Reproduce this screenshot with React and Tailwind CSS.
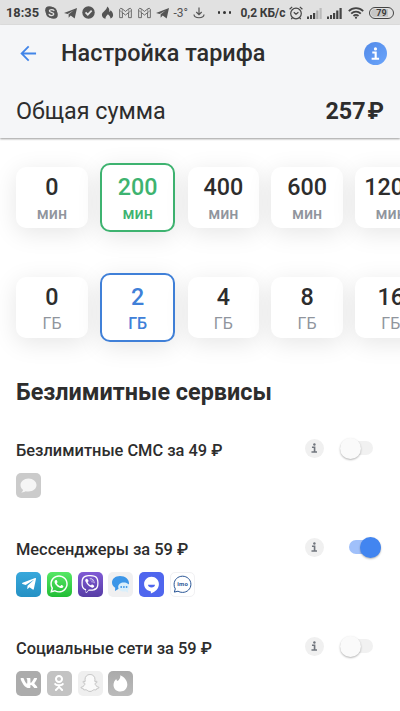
import React, { useState } from "react";
import {
  FaTelegramPlane,
  FaWhatsapp,
  FaViber,
  FaVk,
  FaOdnoklassniki,
  FaSnapchatGhost,
} from "react-icons/fa";

const minutes = ["0", "200", "400", "600", "1200"];
const gigabytes = ["0", "2", "4", "8", "16"];

const Signal = ({ weak }) => (
  <svg viewBox="0 0 15 12" className="w-[15px] h-3 shrink-0" fill="#444">
    <rect x="0" y="9.5" width="2" height="2.5" />
    <rect x="3" y="8" width="2" height="4" />
    <rect x="6" y="6" width="2.2" height="6" />
    <rect x="9.2" y="3.5" width="2.2" height="8.5" fill={weak ? "#aaa" : "#444"} />
    <rect x="12.5" y="1" width="2.2" height="11" fill={weak ? "#bbb" : "#444"} />
  </svg>
);

const Mail = () => (
  <svg viewBox="0 0 14 12" className="w-[13px] h-3 shrink-0" fill="none" stroke="#555" strokeWidth="0.9">
    <path d="M.7 11V2.1Q1.5.2 3.2 1.3L7 4.3l3.8-3Q12.5.2 13.3 2.1V11h-3V5.6L7 8.2 3.7 5.6V11z" />
    <path d="M.9 3.4 3.7 5.6M13.1 3.4l-2.8 2.2M3.5 1.7v3.8M10.5 1.7v3.8" strokeWidth="0.6" />
  </svg>
);

const PaperPlane = () => (
  <svg viewBox="0 0 14 12" className="w-[13px] h-3" fill="currentColor">
    <path d="M0 6 14 .5 11.5 11.8 7.2 8.8 5 11V7.4L10.6 3 3.9 7.1z" />
  </svg>
);

const InfoMark = ({ className }) => (
  <svg viewBox="0 0 8 12" className={className} fill="none" stroke="currentColor" strokeWidth="2">
    <path d="M1.2 5h3.200v5.600M.6 10.900h7" />
    <circle cx="4.200" cy="1.700" r="1.500" fill="currentColor" stroke="none" />
  </svg>
);

const StatusBar = () => (
  <div className="flex items-center h-[25px] bg-[#e1e1e1] pl-[6px] pr-[6px] text-[#3b3b3b] whitespace-nowrap">
    <span className="w-[39px] text-[12.800px] font-bold">18:35</span>
    <div className="flex items-center gap-[5.500px] text-[#555]">
      <svg viewBox="0 0 14 14" className="w-[13px] h-[13px]">
        <circle cx="4.6" cy="4.6" r="4.4" fill="#555" />
        <circle cx="9.4" cy="9.4" r="4.4" fill="#555" />
        <circle cx="7" cy="7" r="6.1" fill="#555" />
        <path
          d="M9.6 4.8C9 3.6 4.9 3.2 4.7 5.2c-.1 2 4.8 1.2 4.8 3.5-.1 2.1-4.3 2-5.1.3"
          fill="none"
          stroke="#e1e1e1"
          strokeWidth="1.4"
          strokeLinecap="round"
        />
      </svg>
      <PaperPlane />
      <svg viewBox="0 0 14 14" className="w-[13px] h-[13px]">
        <circle cx="7" cy="7" r="6.7" fill="currentColor" />
        <path d="m3.8 6.8 2.4 2.5 4.2-4.4" fill="none" stroke="#e1e1e1" strokeWidth="1.9" />
      </svg>
      <svg viewBox="0 0 12 13" className="w-[13px] h-[13px]" fill="currentColor">
        <path d="M5.600.4C8 2 8 3.800 7.700 6c.8-.4 1.200-1 1.300-1.800 1.700 1.400 2.600 3 2.600 4.800 0 1.700-1 3-2.700 3.600.1-2-.9-2.900-2.500-4.400-1.100 1.300-2.700 2.500-2.400 4.600C1.500 12.200.4 10.600.4 8.800.4 5.600 5.400 4.500 5.600.4z" />
      </svg>
      <Mail />
      <Mail />
      <PaperPlane />
    </div>
    <span className="ml-[4.500px] w-[19.500px] text-[12px] text-[#555]">-3°</span>
    <svg viewBox="0 0 12 12" className="w-3 h-3 shrink-0" fill="none" stroke="#555" strokeWidth="1.2">
      <path d="M6 .5v7M3.300 5 6 7.700 8.700 5M1 7.500c.3 4.300 9.700 4.300 10 0" />
    </svg>
    <div className="ml-[12.500px] flex gap-[3px]">
      <i className="size-[2.500px] rounded-full bg-[#333]" />
      <i className="size-[2.500px] rounded-full bg-[#333]" />
      <i className="size-[2.500px] rounded-full bg-[#333]" />
    </div>
    <span className="ml-[9.500px] w-[48px] text-[12px] tracking-[-0.1px] font-bold">0,2 КБ/с</span>
    <svg viewBox="0 0 14 14" className="size-[14px] shrink-0" fill="none" stroke="#444" strokeWidth="1.200">
      <circle cx="7" cy="7.500" r="5.300" />
      <path d="M.6 3.200 3.200.9M13.400 3.200 10.800.9M4.800 6.200 7 8.200l2.400-2M3.300 11.900l-1 1.300M10.700 11.900l1 1.300" />
    </svg>
    <div className="ml-[4px] flex items-center gap-[5px]">
      <Signal weak />
      <Signal />
    </div>
    <svg viewBox="0 0 16 12" className="ml-[6px] w-4 h-3 shrink-0" fill="none" stroke="#444" strokeWidth="1.800">
      <path d="M.8 4.200c4-4 10.400-4 14.400 0M3.200 6.700c2.700-2.700 6.900-2.700 9.600 0M5.500 9c1.400-1.400 3.600-1.400 5 0" />
      <circle cx="8" cy="10.700" r="1.100" fill="#444" stroke="none" />
    </svg>
    <div className="ml-auto w-[25px] h-[12px] rounded-full border border-[#444] p-px">
      <div className="h-full rounded-full bg-[linear-gradient(90deg,#c6c6c6_79%,transparent_79%)] text-[9px] leading-[8.500px] text-center font-bold">
        79
      </div>
    </div>
  </div>
);

const optionStyles = {
  idle: "w-[71.600px] h-[61px] text-[#2d2d2d]",
  green: "w-[75.600px] h-[69px] border-2 border-[#3eb370] text-[#3eb370]",
  blue: "w-[75.600px] h-[69px] border-2 border-[#4080d8] text-[#4080d8]",
};

const OptionRow = ({ values, unit, color, selected, onSelect }) => (
  <div className="flex items-center gap-[12.100px] h-[69px] pl-[16.200px]">
    {values.map((value) => {
      const active = value === selected;
      return (
        <button
          key={value}
          onClick={() => onSelect(value)}
          className={`shrink-0 flex flex-col items-center justify-center pt-[4px] rounded-[10px] bg-white shadow-[0_5px_24px_rgba(0,0,0,0.1)] ${
            active ? optionStyles[color] : optionStyles.idle
          }`}
        >
          <span className="text-[23.300px] leading-[26px] font-medium">{value}</span>
          <span
            className={`text-[16px] leading-[22px] mt-[3px] ${unit === "мин" || active ? "font-medium" : ""} ${
              active ? "" : "text-[#90959d]"
            }`}
          >
            {unit}
          </span>
        </button>
      );
    })}
  </div>
);

const Toggle = ({ on, onChange }) => (
  <button
    role="switch"
    aria-checked={on}
    onClick={onChange}
    className={`flex items-center w-[42px] h-[21px] ${on ? "pl-[9px]" : ""}`}
  >
    <span
      className={`flex items-center h-[14px] rounded-full ${
        on ? "w-[32px] justify-end bg-[#a0c0fa]" : "w-[33px] bg-[#f1f1f1]"
      }`}
    >
      <span
        className={`size-[21px] shrink-0 rounded-full shadow-[0_1px_2px_rgba(0,0,0,0.3)] ${
          on ? "bg-[#4285f0]" : "bg-[#fafafa]"
        }`}
      />
    </span>
  </button>
);

const AppIcon = ({ className, children }) => (
  <div className={`size-[25px] rounded-[5px] flex items-center justify-center ${className}`}>{children}</div>
);

const Service = ({ title, on, onChange, children }) => (
  <section className="h-[99px] pl-4 pr-[18.500px]">
    <div className="flex items-center h-[24px]">
      <h3 className="flex-1 text-[16.400px] font-medium text-[#2d2d2d] whitespace-nowrap pt-[7px]">{title}</h3>
      <span className="size-[19px] rounded-full bg-[#f0f0f0] flex items-center justify-center text-[#70757d]">
        <InfoMark className="w-[6.500px] h-[10px]" />
      </span>
      <div className="ml-[16px]">
        <Toggle on={on} onChange={onChange} />
      </div>
    </div>
    <div className="flex gap-[5.800px] mt-[12.500px]">{children}</div>
  </section>
);

export default function App() {
  const [min, setMin] = useState("200");
  const [gb, setGb] = useState("2");
  const [services, setServices] = useState({ sms: false, messengers: true, social: false });

  const toggle = (name) => setServices({ ...services, [name]: !services[name] });

  return (
    <div className="w-[400px] h-[711px] overflow-hidden bg-white font-[Roboto,sans-serif]">
      <StatusBar />
      <header className="relative h-[113px] bg-[#f5f6f8] shadow-[0_1px_2px_rgba(0,0,0,0.4)] text-[#2d2d2d]">
        <div className="flex items-center h-[57px] pl-[20px] pr-[13px]">
          <svg viewBox="0 0 18 18" className="size-[17px] shrink-0 text-[#4285e8]" fill="none" stroke="currentColor" strokeWidth="1.900">
            <path d="M17 9H2M9.200 1.500 1.700 9l7.500 7.500" />
          </svg>
          <h1 className="ml-[24px] flex-1 pt-[1px] text-[23.400px] font-medium whitespace-nowrap">Настройка тарифа</h1>
          <span className="size-[23px] rounded-full bg-gradient-to-br from-[#5189e8] to-[#6ba5fb] flex items-center justify-center text-white">
            <InfoMark className="w-[8.500px] h-[13px]" />
          </span>
        </div>
        <div className="flex items-center justify-between h-[56px] pt-[3px] pl-4 pr-4">
          <span className="text-[23.300px]">Общая сумма</span>
          <span className="text-[23.300px] font-bold">
            257<span className="ml-[2px]">₽</span>
          </span>
        </div>
      </header>

      <main>
        <div className="pt-[25px]">
          <OptionRow values={minutes} unit="мин" color="green" selected={min} onSelect={setMin} />
        </div>
        <div className="pt-[41px]">
          <OptionRow values={gigabytes} unit="ГБ" color="blue" selected={gb} onSelect={setGb} />
        </div>
        <h2 className="pl-4 mt-[32px] text-[23.400px] leading-[36px] font-bold text-[#2d2d2d]">Безлимитные сервисы</h2>

        <div className="mt-[26px]">
          <Service title="Безлимитные СМС за 49 ₽" on={services.sms} onChange={() => toggle("sms")}>
            <AppIcon className="bg-[#cbcbcb]">
              <svg viewBox="0 0 25 25" fill="#f5f5f5">
                <path d="M12.500 5.500c-4.500 0-8 3-8 6.600 0 2.300 1.200 4 2.600 5-.2 1-.8 1.700-1.800 2.300 1.800.1 3.200-.4 4.200-1.100 1 .2 2 .3 3 .3 4.500 0 8-2.900 8-6.500s-3.500-6.600-8-6.600z" />
              </svg>
            </AppIcon>
          </Service>

          <Service title="Мессенджеры за 59 ₽" on={services.messengers} onChange={() => toggle("messengers")}>
            <AppIcon className="bg-gradient-to-b from-[#38a8dc] to-[#2591c4]">
              <FaTelegramPlane size={16} color="#fff" />
            </AppIcon>
            <AppIcon className="bg-gradient-to-b from-[#55e865] to-[#1fbd34]">
              <FaWhatsapp size={20} color="#fff" />
            </AppIcon>
            <AppIcon className="bg-gradient-to-b from-[#805ad5] to-[#573da5]">
              <FaViber size={18} color="#fff" />
            </AppIcon>
            <AppIcon className="bg-[#f0f0f1]">
              <svg viewBox="0 0 25 25">
                <path d="M12 4c-4.700 0-8 2.900-8 6.500 0 2.300 1.300 4.100 3.200 5.200L7 19l3.700-2.200h2L21 12c.4-4.700-3.600-8-9-8z" fill="#3c96e8" />
                <path d="M15.800 10.500c-3.300 0-5.600 2-5.600 4.500s2.300 4.500 5.600 4.500c.6 0 1.200 0 1.700-.2l2.700 1.400-.3-2.600c1-.8 1.500-1.800 1.500-3.100 0-2.500-2.400-4.500-5.600-4.500z" fill="#d9effb" />
                <g fill="#3c96e8">
                  <circle cx="13.200" cy="15" r=".9" />
                  <circle cx="15.900" cy="15" r=".9" />
                  <circle cx="18.600" cy="15" r=".9" />
                </g>
              </svg>
            </AppIcon>
            <AppIcon className="bg-[#4f66ee]">
              <svg viewBox="0 0 25 25">
                <path d="M12.500 4.800c-4.300 0-7.400 3.300-7.400 7.300 0 4.100 3.100 7 6.800 7.300v2.200c4.300-1.500 8-4.800 8-9.500 0-4-3.100-7.300-7.400-7.300z" fill="#fff" />
                <path d="M9 12.800h7c0 3.600-7 3.600-7 0z" fill="#4f66ee" />
              </svg>
            </AppIcon>
            <AppIcon className="border border-[#f1f1f3] bg-white">
              <svg viewBox="0 0 25 25" className="size-[25px] shrink-0">
                <path
                  d="M12.500 4.200c4.700 0 8.400 3.500 8.400 8.100s-3.700 8.100-8.400 8.100c-1.700 0-3.200-.4-4.500-1.200l-3.700.9 1-3.200a8 8 0 0 1-1.200-4.600c0-4.600 3.700-8.100 8.400-8.100z"
                  fill="none"
                  stroke="#285596"
                  strokeWidth="1"
                />
                <text x="12.700" y="14.400" textAnchor="middle" fontSize="6" letterSpacing=".3" fontWeight="700" fill="#285596">
                  imo
                </text>
              </svg>
            </AppIcon>
          </Service>

          <Service title="Социальные сети за 59 ₽" on={services.social} onChange={() => toggle("social")}>
            <AppIcon className="bg-[#acacac]">
              <FaVk size={18} color="#fff" />
            </AppIcon>
            <AppIcon className="bg-[#c3c3c3]">
              <FaOdnoklassniki size={16} color="#fff" />
            </AppIcon>
            <AppIcon className="bg-[#efefef]">
              <FaSnapchatGhost size={18} color="#fafafa" stroke="#b5b5b5" strokeWidth={22} className="overflow-visible" />
            </AppIcon>
            <AppIcon className="bg-gradient-to-b from-[#aaa] to-[#bbb]">
              <svg viewBox="0 0 25 25" fill="#fff">
                <path d="M12.300 4.300c3.800 1.800 7 5 7 9.300 0 4.200-2.900 7-6.900 7s-6.900-2.900-6.900-6.600c0-2.600 1.200-4.600 2.700-6 .2 1 .6 1.700 1.300 2.100 2-1.300 3.100-3.300 2.800-5.800z" />
              </svg>
            </AppIcon>
          </Service>
        </div>
      </main>
    </div>
  );
}
